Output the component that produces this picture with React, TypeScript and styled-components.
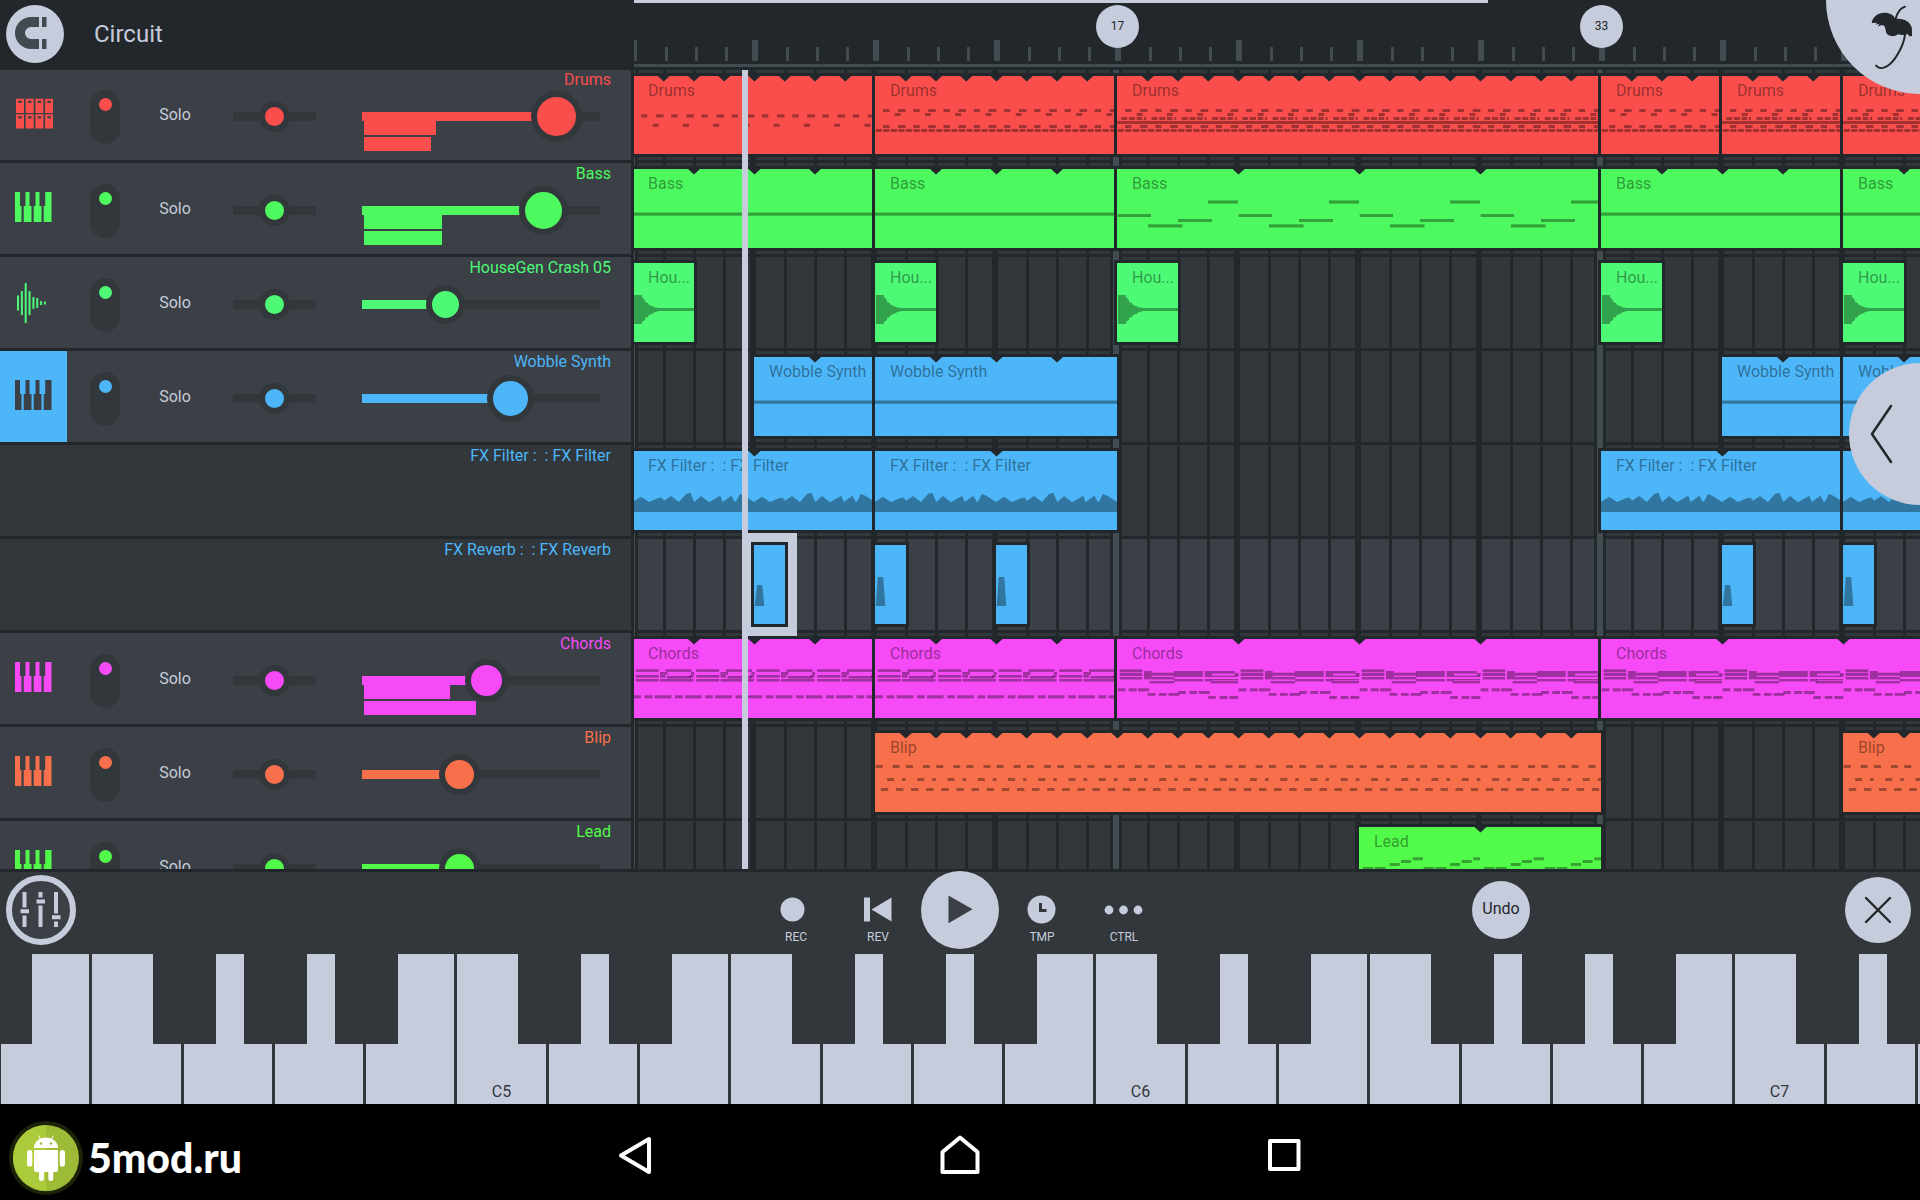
import React from "react";
import styled, { createGlobalStyle, css } from "styled-components";

const C = {
  ink: "#22272b",
  panel: "#32373b",
  row: "#3b4047",
  rule: "#414b50",
  light: "#c6ccdb",
  red: "#f94e4c",
  green: "#4df95e",
  mint: "#4df975",
  blue: "#4cb6f8",
  pink: "#f54af6",
  orange: "#f86f4b",
  lime: "#52fa4a",
};

/* ---------- data ---------- */

type IconKind = "pads" | "keys" | "wave";

type Track = {
  name: string;
  color: string;
  icon?: IconKind;
  selected?: boolean;
  volume?: number;
  knob?: number;
  meters?: number[];
};

const TRACKS: Track[] = [
  { name: "Drums", color: C.red, icon: "pads", volume: 90.5, knob: 51, meters: [72, 67] },
  { name: "Bass", color: C.green, icon: "keys", volume: 83, knob: 49, meters: [78, 78] },
  { name: "HouseGen Crash 05", color: C.mint, icon: "wave", volume: 32, knob: 39 },
  { name: "Wobble Synth", color: C.blue, icon: "keys", selected: true, volume: 65.5, knob: 47 },
  { name: "FX Filter :  : FX Filter", color: C.blue },
  { name: "FX Reverb :  : FX Reverb", color: C.blue },
  { name: "Chords", color: C.pink, icon: "keys", volume: 53, knob: 43, meters: [86, 112] },
  { name: "Blip", color: C.orange, icon: "keys", volume: 39, knob: 41 },
  { name: "Lead", color: C.lime, icon: "keys", volume: 39, knob: 41 },
];

/* A note is [x, y, width, height] inside one repeat of the pattern. */
type Note = [number, number, number, number];
type Pattern = { beats: number; notes?: Note[]; shape?: string; once?: boolean };

const hats: Note[] = [0, 1, 2, 3].map((i): Note => [0.7 + i * 7.56, 53, 6.2, 3]);
const drumsB: Note[] = [
  [8, 33, 6.3, 3], [23, 33, 7.6, 3], [19.7, 37, 6, 3],
  [8, 49, 6.3, 3], [23, 49, 7.6, 3], ...hats,
];

const PATTERNS: Record<string, Pattern> = {
  drumsA: { beats: 1, notes: [[8, 38.3, 6.3, 3.2], [23, 38.3, 7.6, 3.2], [19.7, 47.7, 6, 3.2]] },
  drumsB: { beats: 1, notes: drumsB },
  drumsC: {
    beats: 1,
    notes: [...drumsB, [4.3, 41, 6, 3], [12, 41, 6, 3], [19.7, 41, 5.5, 3], [27, 41, 2, 3], [0, 45, 30.3, 3]],
  },
  line: { beats: 4, notes: [[0, 43.5, 121, 3.2]] },
  bass: {
    beats: 4,
    notes: [[0.7, 45, 33.3, 3], [31, 55.3, 34.5, 3.2], [61, 50, 34, 3], [91, 31.4, 30, 3.2]],
  },
  crash: {
    beats: 2,
    once: true,
    shape:
      "M1 32H9V34L12 37V39L15 40V41L18 43H20V44L26 45H61V48H26L20 50V51H18L15 53V54L12 55V57L9 59V61H1Z",
  },
  filter: {
    beats: 4,
    shape:
      "M0 61V51L8 45.7L16 51L26 46.7H28.7L31 49.7L38 45L46 51L53 43L57.3 41.7L61.3 51L68 45L76 51.3L87.3 44.7L89.7 51L98.3 44.7L102 51.3L104 49L106.7 43L111.3 44.7L121 51V61Z",
  },
  tallStep: { beats: 1, once: true, shape: "M0.7 61L2.7 32H8.3L10.3 61Z" },
  shortStep: { beats: 1, once: true, shape: "M0.7 61L3 40H8.300L10.3 61Z" },
  chordsA: {
    beats: 2,
    notes: [
      [2.7, 30.3, 23, 2.6], [2.7, 36, 23, 2.6], [2.7, 40, 23, 2.6],
      [32.5, 30.3, 26, 2.6], [27, 33, 7.5, 2.8], [58, 33, 3, 2.8],
      [27, 36, 5.5, 2.6], [34, 37, 24, 2.6], [56.5, 36, 4, 2.6], [27, 40, 33.5, 2.6],
      [0, 56.3, 8, 3], [11.7, 56.3, 7.7, 3], [21.7, 56.3, 16.7, 3], [42, 56.3, 7.7, 3], [52, 56.3, 8.5, 3],
    ],
  },
  chordsC: {
    beats: 4,
    notes: [
      [2.7, 30.3, 22.6, 3], [2.7, 34, 22.6, 3], [2.7, 38, 22.6, 2.5],
      [27, 32, 7.7, 8.3], [34.7, 33.7, 22.6, 3], [34.7, 38, 22.6, 2.4], [32.7, 42, 24.3, 2.4],
      [57, 32, 28.7, 6], [57, 40, 28.7, 2.4],
      [87.7, 32, 7.3, 6], [87.7, 40, 7, 2.4],
      [95, 32, 22.7, 2.6], [117.7, 34, 4, 3], [95, 36.6, 26, 1.4], [94, 40, 27, 1.4], [93.7, 42, 27.3, 2.4],
      [0.7, 49.3, 7.7, 3], [11.7, 49.3, 8, 3], [21, 49.3, 11.3, 3],
      [30.7, 54, 7.7, 2.8], [42, 54, 7.7, 2.8], [51.7, 54, 10.7, 2.8],
      [61.3, 52, 7.5, 3], [72.3, 52, 7.7, 3], [81.7, 52, 11, 3],
      [91.3, 57, 7.5, 3], [102.7, 57, 7.7, 3], [112.3, 57, 9, 3],
    ],
  },
  blip: {
    beats: 1,
    notes: [[0.7, 32, 7, 3], [17.7, 32, 7, 3], [12, 45, 7, 3], [27, 45, 3.6, 3], [5.7, 55, 7.6, 3], [21, 55, 7.4, 3]],
  },
  lead: {
    beats: 4,
    notes: [
      [4, 40, 10.3, 3], [15.7, 40, 11, 3], [30.7, 36, 10, 3], [42, 33, 10, 3], [53.7, 30.3, 10.2, 3],
      [64.7, 40, 10.3, 3], [76.3, 40, 11, 3], [91, 36, 10, 3], [102.7, 33, 10, 3], [114.3, 30.3, 6.7, 3],
    ],
  },
};

type ClipData = {
  from: number;
  to: number;
  label?: string;
  pattern: keyof typeof PATTERNS;
  notch?: number;
  selected?: boolean;
};

const wave = (from: number): ClipData => ({ from, to: from + 2, label: "Hou...", pattern: "crash" });

const LANES: { color: string; active?: boolean; clips: ClipData[] }[] = [
  {
    color: C.red,
    clips: [
      { from: 0, to: 8, label: "Drums", pattern: "drumsA", notch: 1 },
      { from: 8, to: 16, label: "Drums", pattern: "drumsB", notch: 1 },
      { from: 16, to: 32, label: "Drums", pattern: "drumsC", notch: 1 },
      { from: 32, to: 36, label: "Drums", pattern: "drumsB", notch: 1 },
      { from: 36, to: 40, label: "Drums", pattern: "drumsC", notch: 1 },
      { from: 40, to: 48, label: "Drums", pattern: "drumsC", notch: 1 },
    ],
  },
  {
    color: C.green,
    clips: [
      { from: 0, to: 8, label: "Bass", pattern: "line", notch: 2 },
      { from: 8, to: 16, label: "Bass", pattern: "line", notch: 2 },
      { from: 16, to: 32, label: "Bass", pattern: "bass", notch: 4 },
      { from: 32, to: 40, label: "Bass", pattern: "line", notch: 2 },
      { from: 40, to: 48, label: "Bass", pattern: "line", notch: 2 },
    ],
  },
  { color: C.mint, clips: [wave(0), wave(8), wave(16), wave(32), wave(40)] },
  {
    color: C.blue,
    clips: [
      { from: 4, to: 8, label: "Wobble Synth", pattern: "line", notch: 2 },
      { from: 8, to: 16, label: "Wobble Synth", pattern: "line", notch: 2 },
      { from: 36, to: 40, label: "Wobble Synth", pattern: "line", notch: 2 },
      { from: 40, to: 48, label: "Wobble Synth", pattern: "line", notch: 2 },
    ],
  },
  {
    color: C.blue,
    clips: [
      { from: 0, to: 8, label: "FX Filter :  : FX Filter", pattern: "filter", notch: 4 },
      { from: 8, to: 16, label: "FX Filter :  : FX Filter", pattern: "filter", notch: 4 },
      { from: 32, to: 40, label: "FX Filter :  : FX Filter", pattern: "filter", notch: 4 },
      { from: 40, to: 48, pattern: "filter", notch: 4 },
    ],
  },
  {
    color: C.blue,
    active: true,
    clips: [
      { from: 4, to: 5, pattern: "shortStep", selected: true },
      { from: 8, to: 9, pattern: "tallStep" },
      { from: 12, to: 13, pattern: "tallStep" },
      { from: 36, to: 37, pattern: "shortStep" },
      { from: 40, to: 41, pattern: "tallStep" },
    ],
  },
  {
    color: C.pink,
    clips: [
      { from: 0, to: 8, label: "Chords", pattern: "chordsA", notch: 2 },
      { from: 8, to: 16, label: "Chords", pattern: "chordsA", notch: 2 },
      { from: 16, to: 32, label: "Chords", pattern: "chordsC", notch: 4 },
      { from: 32, to: 48, label: "Chords", pattern: "chordsC", notch: 4 },
    ],
  },
  {
    color: C.orange,
    clips: [
      { from: 8, to: 32, label: "Blip", pattern: "blip", notch: 1 },
      { from: 40, to: 48, label: "Blip", pattern: "blip", notch: 1 },
    ],
  },
  { color: C.lime, clips: [{ from: 24, to: 32, label: "Lead", pattern: "lead", notch: 4 }] },
];

const BAR = 121 / 4;
const barX = (bar: number) => Math.round(bar * BAR - 0.7);

/* ---------- shared ---------- */

const Global = createGlobalStyle`
  *, *::before, *::after { box-sizing: border-box; }
  html, body { margin: 0; background: #000; }
  body { font-family: Roboto, "Liberation Sans", sans-serif; font-size: 16px; line-height: 20px; overflow: hidden; }
  button { appearance: none; border: 0; padding: 0; margin: 0; background: none; font: inherit; color: inherit; cursor: pointer; }
  svg { display: block; }
`;

const Screen = styled.div`
  display: flex;
  flex-direction: column;
  height: 100vh;
  position: relative;
  overflow: hidden;
  background: ${C.ink};
  color: ${C.light};
`;

const Round = styled.button<{ $size: number }>`
  flex: none;
  display: grid;
  place-items: center;
  width: ${(p) => p.$size}px;
  height: ${(p) => p.$size}px;
  border-radius: 50%;
  background: ${C.light};
  color: ${C.ink};
`;

/* ---------- header ---------- */

const Header = styled.header`
  flex: none;
  display: flex;
  height: 70px;
  position: relative;
  z-index: 1;
  background: ${C.ink};
`;

const TitleArea = styled.div`
  flex: none;
  width: 634px;
  display: flex;
  align-items: center;
  gap: 30px;
  padding: 0 0 2px 6px;
`;

const Title = styled.h1`
  margin: 0;
  font-size: 24px;
  line-height: 28px;
  font-weight: 400;
`;

const Ruler = styled.div`
  flex: 1;
  min-width: 0;
  position: relative;
  overflow: hidden;
  background:
    linear-gradient(${C.rule}, ${C.rule}) 0 64px / 100% 3px no-repeat,
    linear-gradient(90deg, ${C.rule} 6px, transparent 6px) -3px 40px / 121px 21px repeat-x,
    linear-gradient(
        90deg,
        transparent 34px, ${C.rule} 34px 37px,
        transparent 37px 64px, ${C.rule} 64px 67px,
        transparent 67px 94px, ${C.rule} 94px 97px,
        transparent 97px
      ) -3px 47px / 121px 14px repeat-x;
`;

const SongExtent = styled.div`
  width: 854px;
  height: 3px;
  background: ${C.light};
`;

const Marker = styled.div`
  position: absolute;
  top: 5px;
  width: 43px;
  height: 43px;
  margin-left: -21px;
  padding-bottom: 2px;
  display: grid;
  place-items: center;
  border-radius: 50%;
  background: ${C.light};
  color: ${C.ink};
  font-size: 12px;
`;

const LogoCorner = styled.button`
  position: absolute;
  top: 0;
  right: 0;
  z-index: 3;
  width: 94px;
  height: 94px;
  display: flex;
  justify-content: flex-end;
  padding: 5px 6px 0 0;
  border-bottom-left-radius: 94px;
  background: ${C.light};
`;

const DrawerTab = styled.button`
  position: absolute;
  top: 363px;
  right: 0;
  z-index: 3;
  width: 71px;
  height: 142px;
  display: flex;
  align-items: center;
  padding-left: 20px;
  border-radius: 71px 0 0 71px;
  background: ${C.light};
`;

/* ---------- arranger ---------- */

const Arranger = styled.main`
  flex: 1;
  min-height: 0;
  display: flex;
  gap: 3px;
  overflow: hidden;
  border-bottom: 3px solid ${C.ink};
`;

const TrackList = styled.section`
  flex: none;
  width: 631px;
  margin-top: -1px;
`;

const TrackRow = styled.div<{ $fx?: boolean }>`
  display: grid;
  grid-template-columns: 67px 76px 64px 135px 278px 11px;
  align-items: center;
  height: 94px;
  border-bottom: 3px solid ${C.ink};
  background: ${(p) => (p.$fx ? C.panel : C.row)};
`;

const Name = styled.span<{ $color: string }>`
  grid-area: 1 / 1 / 2 / -1;
  place-self: start end;
  padding: 1px 20px 0 0;
  white-space: pre;
  color: ${(p) => p.$color};
`;

const IconCell = styled.button<{ $color: string; $on?: boolean }>`
  grid-area: 1 / 1;
  align-self: stretch;
  display: grid;
  place-items: center;
  padding-bottom: 3px;
  background: ${(p) => (p.$on ? p.$color : "transparent")};
  color: ${(p) => (p.$on ? C.row : p.$color)};
`;

const Mute = styled.input<{ $color: string }>`
  grid-area: 1 / 2;
  appearance: none;
  justify-self: center;
  display: flex;
  justify-content: center;
  align-items: flex-start;
  width: 30px;
  height: 54px;
  margin: 4px 0 0;
  padding-top: 8px;
  border-radius: 15px;
  background: ${C.panel};
  &::before {
    content: "";
    width: 13px;
    height: 13px;
    border-radius: 50%;
    background: ${(p) => p.$color};
  }
`;

const Solo = styled.button`
  grid-area: 1 / 3;
  height: 40px;
`;

const Slot = styled.div<{ $col: number; $width: number }>`
  grid-area: 1 / ${(p) => p.$col};
  justify-self: center;
  position: relative;
  width: ${(p) => p.$width}px;
  margin-top: 4px;
`;

const Range = styled.input<{ $color: string; $knob: number; $fill: number }>`
  appearance: none;
  display: block;
  position: relative;
  z-index: 1;
  width: 100%;
  height: 9px;
  margin: 0;
  background: linear-gradient(90deg, ${(p) => p.$color} ${(p) => p.$fill}%, ${C.panel} ${(p) => p.$fill}%);
  &::-webkit-slider-runnable-track {
    height: 9px;
  }
  &::-webkit-slider-thumb {
    appearance: none;
    width: ${(p) => p.$knob}px;
    height: ${(p) => p.$knob}px;
    margin-top: ${(p) => (9 - p.$knob) / 2}px;
    border: 6px solid ${C.panel};
    border-radius: 50%;
    background: ${(p) => p.$color};
  }
`;

const Meters = styled.div`
  position: absolute;
  top: 100%;
  left: 2px;
  display: grid;
  gap: 2px;
`;

const Meter = styled.div<{ $color: string }>`
  height: 14px;
  background: ${(p) => p.$color};
`;

const Timeline = styled.section`
  flex: 1;
  min-width: 0;
  position: relative;
  overflow: hidden;
`;

const Lane = styled.div<{ $active?: boolean }>`
  --cell: ${(p) => (p.$active ? C.row : C.panel)};
  position: relative;
  height: 94px;
  background:
    linear-gradient(
        90deg,
        ${C.ink} 3px, ${C.rule} 3px 9px, ${C.ink} 9px 12px, transparent 12px
      ) -8px 0 / 484px 100% repeat-x,
    linear-gradient(0deg, ${C.ink} 3px, transparent 3px),
    linear-gradient(
        90deg,
        ${C.ink} 6px, var(--cell) 6px 34px,
        ${C.ink} 34px 37px, var(--cell) 37px 64px,
        ${C.ink} 64px 67px, var(--cell) 67px 94px,
        ${C.ink} 94px 97px, var(--cell) 97px
      ) -5px 0 / 121px 100% repeat-x;
  &:first-child {
    height: 93px;
  }
`;

const ClipBox = styled.div<{ $color: string; $selected?: boolean }>`
  position: absolute;
  top: 6px;
  bottom: 9px;
  background: ${(p) => p.$color};
  box-shadow: 0 0 0 3px ${C.ink};
  ${(p) =>
    p.$selected &&
    css`
      z-index: 1;
      box-shadow: 0 0 0 3px ${C.ink}, 0 0 0 12px ${C.light};
    `}
`;

const ClipArt = styled.svg`
  position: absolute;
  inset: 0;
  width: 100%;
  height: 100%;
`;

const ClipLabel = styled.span`
  display: block;
  overflow: hidden;
  padding: 5px 0 0 15px;
  white-space: pre;
  color: rgba(0, 0, 0, 0.4);
`;

const Playhead = styled.div`
  position: absolute;
  top: 0;
  bottom: 0;
  left: 108px;
  z-index: 2;
  width: 6px;
  background: ${C.light};
`;

/* ---------- transport ---------- */

const Transport = styled.section`
  flex: none;
  display: grid;
  grid-template-columns: 1fr auto 1fr;
  align-items: center;
  position: relative;
  z-index: 1;
  height: 82px;
  padding-bottom: 6px;
  background: ${C.panel};
`;

const Left = styled.div`
  padding-left: 6px;
`;

const MixerButton = styled(Round)`
  border: 6px solid ${C.light};
  background: ${C.row};
  color: ${C.light};
`;

const Controls = styled.div`
  display: grid;
  grid-template-columns: repeat(5, 82px);
  place-items: center;
  margin: -2px 0;
`;

const Control = styled.button`
  display: grid;
  justify-items: center;
  align-content: start;
  width: 82px;
  height: 80px;
  padding-top: 20px;
  font-size: 12px;
  line-height: 14px;
`;

const Right = styled.div`
  display: flex;
  justify-content: space-between;
  align-items: center;
  padding: 0 9px 0 307px;
`;

const UndoButton = styled(Round)`
  padding-bottom: 2px;
`;

/* ---------- keyboard ---------- */

const Keyboard = styled.section`
  flex: none;
  display: grid;
  grid-auto-flow: column;
  grid-auto-columns: 4.757%;
  height: 150px;
  padding-left: 1px;
  overflow: hidden;
  background: ${C.panel};
`;

const KeySlot = styled.div`
  position: relative;
  padding-right: 3px;
`;

const WhiteKey = styled.button`
  display: flex;
  align-items: flex-end;
  justify-content: center;
  width: 100%;
  height: 100%;
  padding-bottom: 2px;
  background: ${C.light};
  color: ${C.panel};
`;

const BlackKey = styled.button<{ $side: "left" | "right" }>`
  position: absolute;
  top: 0;
  ${(p) => p.$side}: -32px;
  z-index: 1;
  width: 63px;
  height: 90px;
  background: ${C.panel};
`;

/* ---------- system bar ---------- */

const SystemBar = styled.nav`
  flex: none;
  display: grid;
  grid-template-columns: 1fr auto 1fr;
  align-items: center;
  height: 96px;
  padding-top: 6px;
  background: #000;
  color: #fff;
`;

const Brand = styled.a`
  display: flex;
  align-items: center;
  gap: 4px;
  padding: 6px 0 0 8px;
  color: #fff;
  text-decoration: none;
  font: 900 41px/44px Lato, "Open Sans", sans-serif;
`;

const SystemKeys = styled.div`
  display: grid;
  grid-template-columns: repeat(3, 324px);
`;

const SystemKey = styled.button`
  display: grid;
  place-items: center;
  height: 60px;
`;

/* ---------- drawings ---------- */

const PadsIcon = () => (
  <svg width="38" height="44" viewBox="0 0 38 44" fill="currentColor">
    {[1, 10.7, 20.4, 30.1].map((x) =>
      [7.7, 23.3].map((y) => (
        <path key={`${x}-${y}`} fillRule="evenodd" d={`M${x} ${y}h8v14.3h-8zM${x + 2.3} ${y + 2}v2.2h3.4v-2.2z`} />
      ))
    )}
  </svg>
);

const KeysIcon = () => (
  <svg width="38" height="44" viewBox="1 0 38 44" fill="currentColor">
    <path d="M0 7H6V21H7.500V37H0Z" />
    <path d="M11.500 7H15.500V21H17.500V37H9.700V21H11.500Z" />
    <path d="M21.500 7H25.500V21H27.500V37H19.700V21H21.500Z" />
    <path d="M31.200 7H37.500V37H29.700V21H31.200Z" />
  </svg>
);

const WaveIcon = () => (
  <svg width="38" height="44" viewBox="1 0 38 44" stroke="currentColor" strokeWidth="2">
    {[15, 24, 40, 24, 12, 10, 4, 3].map((h, i) => (
      <path key={i} d={`M${4 + i * 3.85} ${24 - h / 2}v${h}`} />
    ))}
  </svg>
);

const ICONS = { pads: PadsIcon, keys: KeysIcon, wave: WaveIcon };

const MagnetIcon = () => (
  <svg width="58" height="58" viewBox="0 0 58 58" fill="#414b4f">
    <path d="M33 12H25A16 16 0 0 0 25 44H33V34H25A6 6 0 0 1 25 22H33Z" />
    <path d="M36 12h4.500v10h-4.500zM36 34h4.500v10h-4.500z" />
  </svg>
);

const PalmIcon = () => (
  <svg width="44" height="65" viewBox="1410 15 132 195" fill="none" stroke={C.ink} strokeLinecap="round">
    <path strokeWidth="6" d="M1515 20C1502 24 1492 38 1487 56" />
    <path
      fill={C.ink}
      stroke="none"
      d="M1415 69C1418 50 1434 38 1453 38C1470 38 1482 45 1486 57C1512 54 1532 66 1536 86V108C1531 111 1526 107 1522 101C1514 107 1503 105 1494 103C1486 110 1473 110 1464 104C1456 98 1458 88 1454 80C1450 73 1443 76 1434 79L1438 71L1427 74L1431 68Z"
    />
    <path strokeWidth="6" d="M1515 104C1511 138 1484 187 1459 200C1446 207 1434 204 1428 197" />
  </svg>
);

const ClipDrawing = ({ clip, width }: { clip: ClipData; width: number }) => {
  const p = PATTERNS[clip.pattern];
  const bars = clip.to - clip.from;
  const repeats = p.once ? 1 : Math.ceil(bars / p.beats);
  const notches: number[] = [];
  if (clip.notch) for (let b = clip.notch; b < bars; b += clip.notch) notches.push(b * BAR + 0.5);
  return (
    <ClipArt aria-hidden="true">
      <g fill="#000" fillOpacity="0.35">
        {Array.from({ length: repeats }, (_, r) => (
          <g key={r} transform={`translate(${r * p.beats * BAR} 0)`}>
            {p.shape && <path d={p.shape} />}
            {p.notes?.map(([x, y, w, h], i) => (
              <rect key={i} x={x} y={y} width={Math.min(w, width)} height={h} />
            ))}
          </g>
        ))}
      </g>
      {notches.map((x) => (
        <path key={x} fill={C.ink} d={`M${x - 6} 0h12l-6 5.500z`} />
      ))}
    </ClipArt>
  );
};

/* ---------- parts ---------- */

const TrackStrip = ({ track }: { track: Track }) => {
  const { name, color, icon, selected, volume = 0, knob = 39, meters } = track;
  if (!icon)
    return (
      <TrackRow $fx>
        <Name $color={color}>{name}</Name>
      </TrackRow>
    );
  const Icon = ICONS[icon];
  return (
    <TrackRow>
      <IconCell $color={color} $on={selected} aria-label={`${name} instrument`}>
        <Icon />
      </IconCell>
      <Mute type="checkbox" defaultChecked $color={color} aria-label={`${name} on`} />
      <Solo>Solo</Solo>
      <Slot $col={4} $width={83}>
        <Range type="range" defaultValue={50} $color={color} $knob={31} $fill={0} aria-label={`${name} pan`} />
      </Slot>
      <Slot $col={5} $width={238}>
        {meters && (
          <Meters>
            {meters.map((w, i) => (
              <Meter key={i} $color={color} style={{ width: w }} />
            ))}
          </Meters>
        )}
        <Range
          type="range"
          step="any"
          defaultValue={volume}
          $color={color}
          $knob={knob}
          $fill={volume}
          aria-label={`${name} volume`}
        />
      </Slot>
      <Name $color={color}>{name}</Name>
    </TrackRow>
  );
};

const Clip = ({ clip, color }: { clip: ClipData; color: string }) => {
  const left = barX(clip.from);
  const width = barX(clip.to) - left;
  return (
    <ClipBox $color={color} $selected={clip.selected} style={{ left, width }}>
      <ClipDrawing clip={clip} width={width} />
      {clip.label && <ClipLabel>{clip.label}</ClipLabel>}
    </ClipBox>
  );
};

const WHITE = "EFGABCD";
const KEYS = Array.from({ length: 22 }, (_, i) => {
  const note = WHITE[i % 7];
  return { note, octave: 5 + Math.floor((i - 5) / 7), sharp: note !== "E" && note !== "B" };
});

export default function App() {
  return (
    <Screen>
      <Global />
      <Header>
        <TitleArea>
          <Round $size={58} aria-label="Snap">
            <MagnetIcon />
          </Round>
          <Title>Circuit</Title>
        </TitleArea>
        <Ruler>
          <SongExtent />
          {[17, 33].map((bar) => (
            <Marker key={bar} style={{ left: barX(bar - 1) }}>
              {bar}
            </Marker>
          ))}
        </Ruler>
      </Header>

      <Arranger>
        <TrackList>
          {TRACKS.map((t) => (
            <TrackStrip key={t.name} track={t} />
          ))}
        </TrackList>
        <Timeline>
          {LANES.map((lane, i) => (
            <Lane key={i} $active={lane.active}>
              {lane.clips.map((clip) => (
                <Clip key={clip.from} clip={clip} color={lane.color} />
              ))}
            </Lane>
          ))}
          <Playhead />
        </Timeline>
      </Arranger>

      <Transport>
        <Left>
          <MixerButton $size={70} aria-label="Mixer">
            <svg width="58" height="58" viewBox="6 6 58 58" fill="none" stroke="currentColor" strokeWidth="4">
              <path d="M18.500 17V32.500M18.500 40.500V52M34.500 17V22.500M34.500 30.500V52M50 17V38.500M50 46.500V52" />
              <path d="M14.500 36.300h8.500M30.500 26.500h8.500M46 42.300h8.500" />
            </svg>
          </MixerButton>
        </Left>
        <Controls>
          <Control>
            <svg width="40" height="40" fill="currentColor">
              <circle cx="16.500" cy="19.500" r="12" />
            </svg>
            REC
          </Control>
          <Control>
            <svg width="40" height="40" fill="currentColor">
              <path d="M6 7.500h6v24h-6zM33.500 7.500v24L13.500 19.500z" />
            </svg>
            REV
          </Control>
          <Round $size={78} aria-label="Play">
            <svg width="26" height="30" fill={C.row}>
              <path d="M1.500 0.500L25.500 14.300L1.500 28.300Z" />
            </svg>
          </Round>
          <Control>
            <svg width="40" height="40">
              <circle cx="19.500" cy="19.500" r="14" fill="currentColor" />
              <path d="M18.500 13V20.500H24.500" fill="none" stroke={C.panel} strokeWidth="3" />
            </svg>
            TMP
          </Control>
          <Control>
            <svg width="40" height="40" fill="currentColor">
              <circle cx="5" cy="20" r="4.400" />
              <circle cx="19.500" cy="20" r="4.400" />
              <circle cx="34" cy="20" r="4.400" />
            </svg>
            CTRL
          </Control>
        </Controls>
        <Right>
          <UndoButton $size={58}>Undo</UndoButton>
          <Round $size={66} aria-label="Close">
            <svg width="28" height="28" stroke="currentColor" strokeWidth="2.400" strokeLinecap="round">
              <path d="M2 2L26 26M26 2L2 26" />
            </svg>
          </Round>
        </Right>
      </Transport>

      <Keyboard>
        {KEYS.map((k, i) => (
          <KeySlot key={i}>
            {i === 0 && <BlackKey $side="left" aria-label="D sharp" />}
            <WhiteKey aria-label={`${k.note}${k.octave}`}>{k.note === "C" ? `C${k.octave}` : null}</WhiteKey>
            {k.sharp && <BlackKey $side="right" aria-label={`${k.note} sharp ${k.octave}`} />}
          </KeySlot>
        ))}
      </Keyboard>

      <SystemBar>
        <Brand href="#">
          <svg width="76" height="76" viewBox="0 0 76 76">
            <circle cx="38" cy="38" r="37" fill="#1c2309" />
            <circle cx="38" cy="38" r="33" fill="#9dbb36" />
            <path d="M38 5A33 33 0 0 0 38 71Z" fill="#abcb3a" />
            <path d="M9 54A33 33 0 0 0 67 54A34 34 0 0 1 9 54Z" fill="#93b233" />
            <g fill="#fff">
              <path d="M26 28A12 10.500 0 0 1 50 28ZM26 30H50V50Q50 52 48 52H28Q26 52 26 50Z" />
              <rect x="19" y="30" width="5.300" height="16.500" rx="2.600" />
              <rect x="51.700" y="30" width="5.300" height="16.500" rx="2.600" />
              <path d="M31 50h5v8.500a2 2 0 0 1-5 0zM40.300 50h5v8.500a2 2 0 0 1-5 0z" />
            </g>
            <path d="M30.500 15.500L33 20M45.500 15.500L43 20" stroke="#fff" strokeWidth="1" />
            <circle cx="33" cy="23.500" r="1.200" fill="#9dbb36" />
            <circle cx="43" cy="23.500" r="1.200" fill="#9dbb36" />
          </svg>
          5mod.ru
        </Brand>
        <SystemKeys>
          <SystemKey aria-label="Back">
            <svg width="40" height="40" fill="none" stroke="#fff" strokeWidth="4" strokeLinejoin="round">
              <path d="M33 4V37L5 20.500Z" />
            </svg>
          </SystemKey>
          <SystemKey aria-label="Home">
            <svg width="40" height="40" fill="none" stroke="#fff" strokeWidth="4" strokeLinejoin="round">
              <path d="M20 2.500L37.500 17V37H2.500V17Z" />
            </svg>
          </SystemKey>
          <SystemKey aria-label="Recent apps">
            <svg width="40" height="40" fill="none" stroke="#fff" strokeWidth="4" strokeLinejoin="round">
              <rect x="6" y="6" width="28.500" height="28" />
            </svg>
          </SystemKey>
        </SystemKeys>
      </SystemBar>

      <LogoCorner aria-label="Main menu">
        <PalmIcon />
      </LogoCorner>
      <DrawerTab aria-label="Open drawer">
        <svg width="26" height="62" fill="none" stroke={C.ink} strokeWidth="2.500" strokeLinecap="round" strokeLinejoin="round">
          <path d="M22 3L3 31L22 59" />
        </svg>
      </DrawerTab>
    </Screen>
  );
}
